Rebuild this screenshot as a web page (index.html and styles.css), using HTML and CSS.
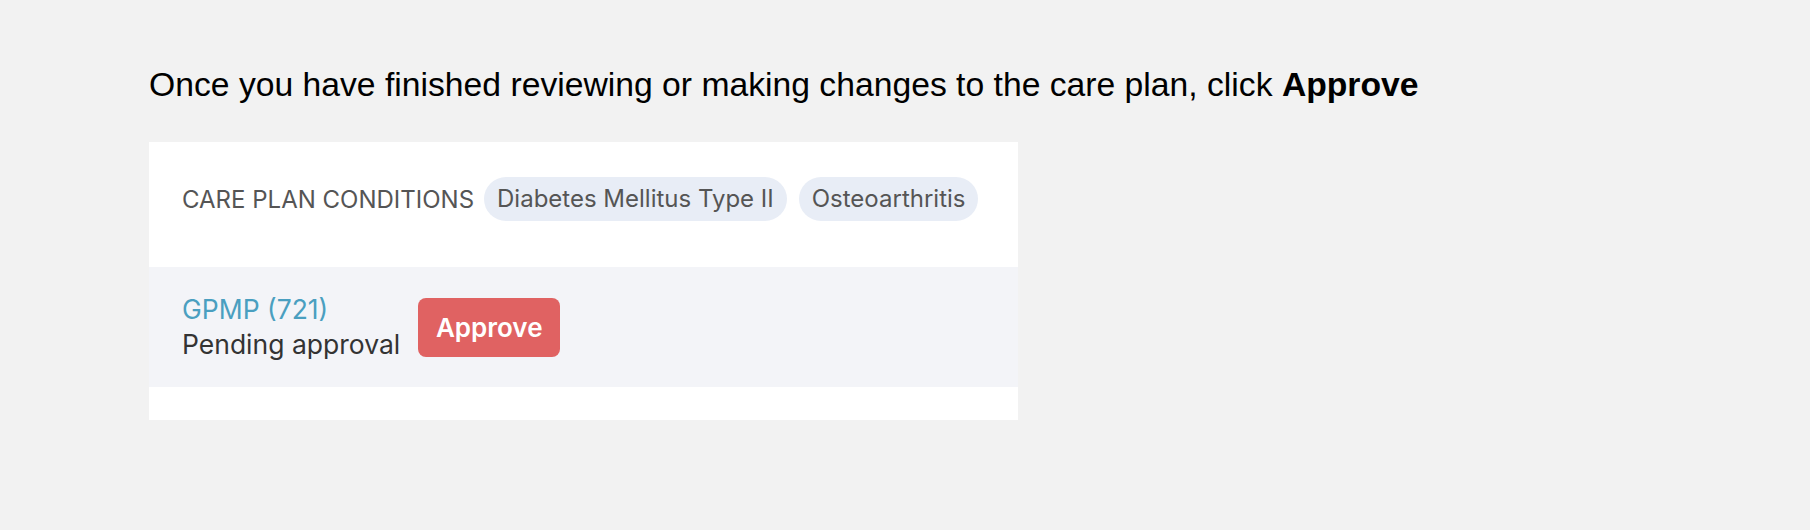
FILE: index.html
```html
<!DOCTYPE html>
<html lang="en">
<head>
  <meta charset="UTF-8" />
  <title>Approve care plan</title>
  <link rel="stylesheet" href="styles.css">
</head>
<body>

  <p class="intro">Once you have finished reviewing or making changes to the care plan, click <strong>Approve</strong></p>

  <div class="card">
    <!-- Conditions -->
    <div class="conditions">
      <span class="label">CARE PLAN CONDITIONS</span>
      <span class="chip">Diabetes Mellitus Type II</span>
      <span class="chip">Osteoarthritis</span>
    </div>

    <!-- Plan row -->
    <div class="plan">
      <div class="plan-info">
        <a class="plan-name" href="#">GPMP (721)</a>
        <div class="plan-status">Pending approval</div>
      </div>
      <button class="approve">Approve</button>
    </div>
  </div>

</body>
</html>
```

FILE: styles.css
```css
* {
  box-sizing: border-box;
}

body {
  margin: 0;
  padding: 65px 149px;
  background-color: #f2f2f2;
  font-family: 'Liberation Sans', Arial, sans-serif;
}

.intro {
  margin: 0 0 38px;
  font-size: 33.7px;
  color: #000;
}

.card {
  width: 869px;
  background-color: white;
  padding-bottom: 33px;
  font-family: 'Inter', sans-serif;
}

.conditions {
  display: flex;
  align-items: center;
  gap: 12px;
  padding: 35px 33px 46px;
}

.label {
  font-size: 24px;
  color: #555;
  margin-right: -2px;
}

.chip {
  height: 44px;
  line-height: 44px;
  padding: 0 13px;
  border-radius: 22px;
  background-color: #e8edf6;
  color: #555;
  font-size: 24px;
}

.plan {
  display: flex;
  align-items: center;
  gap: 18px;
  height: 120px;
  padding: 0 33px;
  background-color: #f3f4f8;
}

.plan-info {
  font-size: 26.5px;
  line-height: 35px;
}

.plan-name {
  color: #4a9fc0;
  text-decoration: none;
}

.plan-status {
  color: #333;
}

.approve {
  width: 142px;
  height: 59px;
  border: none;
  border-radius: 8px;
  background-color: #e06262;
  color: white;
  font-family: 'Inter', sans-serif;
  font-size: 26px;
  font-weight: 600;
  cursor: pointer;
}
```
